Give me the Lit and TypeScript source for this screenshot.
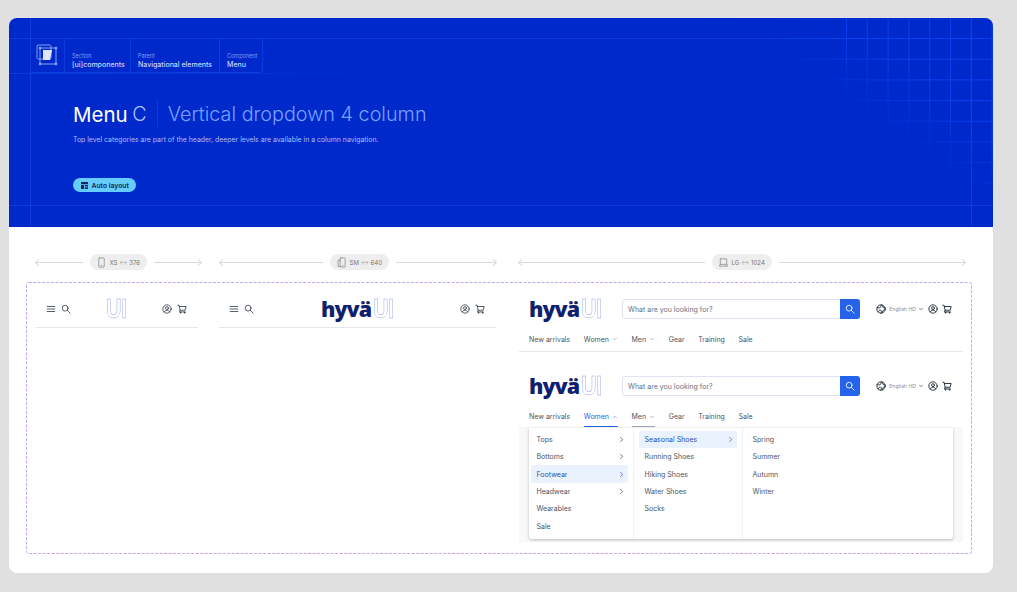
import { LitElement, html, css, svg } from 'lit'
import { customElement } from 'lit/decorators.js'
import { classMap } from 'lit/directives/class-map.js'

const icon = (size: number, body: unknown, stroke = '#1f2937', width = 1.8) => html`
  <svg class="icon" width=${size} height=${size} viewBox="0 0 24 24" fill="none" stroke=${stroke}
    stroke-width=${width} stroke-linecap="round" stroke-linejoin="round">${body}</svg>
`

const menuPath = svg`<path d="M3 6h18M3 12h18M3 18h18" />`
const searchPath = svg`<circle cx="10" cy="10" r="7" /><path d="M15.5 15.5L22 22" />`
const userPath = svg`<circle cx="12" cy="12" r="10" /><circle cx="12" cy="10" r="3.5" /><path d="M5.5 19c1.5-3 4-4 6.500-4s5 1 6.500 4" />`
const cartPath = svg`<path d="M2 3h3l2.500 12h12L22 6H6" /><path d="M7.500 15L6 19h14" /><circle cx="8" cy="21" r="1" /><circle cx="18" cy="21" r="1" />`
const globePath = svg`<circle cx="12" cy="12" r="10" /><path d="M3 9c3-1 5 1 7 0s1-5 3-7M5 19c1-3 3-5 6-4s2 4 1 7M15 21c0-3 1-5 3-6s3 0 4-1M16 3c-1 2-1 4 1 5s3 0 5 1" />`
const chevronDown = svg`<path d="M6 9l6 6 6-6" />`
const chevronUp = svg`<path d="M6 15l6-6 6 6" />`
const chevronRight = svg`<path d="M9 5l7 7-7 7" />`

const phonePath = svg`<rect x="6" y="2" width="12" height="20" rx="2" /><path d="M11 18.500h2" />`
const tabletPath = svg`<rect x="9" y="2" width="11" height="20" rx="1.500" /><path d="M9 7H4.500v13.500H9M14 18.500h1" />`
const laptopPath = svg`<path d="M6 4h12a1 1 0 0 1 1 1v11H5V5a1 1 0 0 1 1-1z" /><path d="M5 16l-2 4h18l-2-4" />`

const NAV = [
  { label: 'New arrivals' },
  { label: 'Women', chevron: true },
  { label: 'Men', chevron: true },
  { label: 'Gear' },
  { label: 'Training' },
  { label: 'Sale' },
]

const COL_ONE = [
  { label: 'Tops', more: true },
  { label: 'Bottoms', more: true },
  { label: 'Footwear', more: true, active: true },
  { label: 'Headwear', more: true },
  { label: 'Wearables' },
  { label: 'Sale' },
]
const COL_TWO = [
  { label: 'Seasonal Shoes', more: true, active: true },
  { label: 'Running Shoes' },
  { label: 'Hiking Shoes' },
  { label: 'Water Shoes' },
  { label: 'Socks' },
]
const COL_THREE = [{ label: 'Spring' }, { label: 'Summer' }, { label: 'Autumn' }, { label: 'Winter' }]

type MenuItem = { label: string; more?: boolean; active?: boolean }

@customElement('app-root')
export class AppRoot extends LitElement {
  static styles = css`
    :host {
      display: block;
      width: 1017px;
      height: 592px;
      box-sizing: border-box;
      padding: 18px 24px 19px 9px;
      background: #e0e0e0;
      font-family: Inter, 'Liberation Sans', sans-serif;
      overflow: hidden;
    }

    .card {
      height: 555px;
      background: #fff;
      border-radius: 8px;
      overflow: hidden;
    }

    .icon {
      display: block;
      flex: none;
    }

    /* hero */
    .hero {
      position: relative;
      height: 209px;
      box-sizing: border-box;
      padding: 20px 0 0 21px;
      background: #0029cc;
      overflow: hidden;
    }
    .hero-line {
      position: absolute;
      background: #0a3ce0;
    }
    .hl-top { left: 0; right: 0; top: 20px; height: 1px; }
    .hl-mid { left: 0; width: 420px; top: 55px; height: 1px; background: linear-gradient(90deg, #0a3ce0, #0029cc); }
    .hl-bottom { left: 0; right: 0; top: 187px; height: 1px; }
    .vl-left { left: 21px; top: 0; bottom: 0; width: 1px; }
    .vl-right { left: 962px; top: 0; bottom: 0; width: 1px; }
    .grid-fade {
      position: absolute;
      left: 700px;
      top: 0;
      width: 284px;
      height: 190px;
      -webkit-mask-image: linear-gradient(to top right, transparent 50%, #000 72%);
      mask-image: linear-gradient(to top right, transparent 50%, #000 72%);
    }
    .grid-v {
      position: absolute;
      left: 137px;
      right: 0;
      top: 0;
      bottom: 0;
      background-image: linear-gradient(90deg, #0a40ec 1px, transparent 1px);
      background-size: 20.800px 100%;
    }
    .grid-h {
      position: absolute;
      inset: 0;
      background-image: linear-gradient(#0a40ec 1px, transparent 1px);
      background-size: 100% 20.700px;
      background-position: 0 20px;
    }

    .crumbs {
      position: relative;
      display: flex;
      width: max-content;
      height: 35px;
      border-right: 1px solid #0a3ce0;
      border-bottom: 1px solid #0a3ce0;
      border-bottom-right-radius: 3px;
      box-sizing: border-box;
    }
    .crumb-logo {
      width: 35px;
      display: flex;
      align-items: center;
      justify-content: center;
      border-right: 1px solid #0a3ce0;
      box-sizing: border-box;
    }
    .crumb {
      display: flex;
      flex-direction: column;
      justify-content: flex-end;
      gap: 2px;
      padding: 0 7px 3.500px;
      border-right: 1px solid #0a3ce0;
      box-sizing: border-box;
    }
    .crumb:last-child { border-right: 0; }
    .crumb small {
      font-size: 5.500px;
      line-height: 6px;
      color: #7f9cf5;
    }
    .crumb span {
      font-size: 7px;
      line-height: 8px;
      font-weight: 500;
      color: #c9d5fb;
      white-space: nowrap;
    }

    .title {
      position: relative;
      display: flex;
      align-items: center;
      margin: 27px 0 0 43px;
      height: 28px;
      font-size: 19.800px;
      font-weight: 300;
      white-space: nowrap;
    }
    .title b {
      font-size: 20.500px;
      font-weight: 400;
      color: #fff;
    }
    .title .letter {
      margin-left: 4.500px;
      color: #a9c0ff;
    }
    .title .sub {
      margin-left: 10px;
      padding-left: 10px;
      border-left: 1px solid #0a3ce0;
      color: #79a0ff;
      line-height: 26px;
    }
    .lead {
      position: relative;
      margin: 7px 0 0 43px;
      font-size: 6.900px;
      line-height: 9px;
      color: #a9bdf8;
    }
    .badge {
      position: relative;
      display: flex;
      align-items: center;
      gap: 4px;
      width: max-content;
      height: 14px;
      margin: 34px 0 0 43px;
      padding: 0 7px 0 7.500px;
      border-radius: 7px;
      background: #66ccfb;
      color: #0b2a5e;
      font-size: 6.800px;
      font-weight: 600;
    }

    /* breakpoint rulers */
    .rulers {
      display: flex;
      padding: 27px 0 0 27px;
    }
    .ruler {
      flex: none;
      display: flex;
      align-items: center;
      gap: 7px;
      height: 16px;
    }
    .ruler.xs { width: 165px; }
    .ruler.sm { width: 276px; margin-left: 19px; }
    .ruler.lg { width: 446px; margin-left: 23px; }
    .ruler i {
      position: relative;
      flex: 1;
      height: 1px;
      background: #d9d9d9;
    }
    .ruler i.start { flex: none; }
    .ruler.xs i.start { width: 47px; }
    .ruler.sm i.start { width: 103px; }
    .ruler.lg i.start { width: 186px; }
    .ruler i::after {
      content: '';
      position: absolute;
      top: -2px;
      width: 4px;
      height: 4px;
      border-top: 1px solid #d9d9d9;
      border-left: 1px solid #d9d9d9;
    }
    .ruler i.start::after { left: 0; transform: rotate(-45deg); }
    .ruler i.end::after { right: 0; transform: rotate(135deg); }
    .pill {
      display: flex;
      align-items: center;
      gap: 3px;
      height: 16px;
      padding: 0 7px 0 5.500px;
      border-radius: 8px;
      background: #eeeeee;
      color: #777;
      font-size: 6.100px;
      white-space: nowrap;
    }
    .pill em {
      font-style: normal;
      color: #a8a8a8;
    }

    /* dashed frame */
    .frame {
      position: relative;
      display: flex;
      align-items: flex-start;
      width: 946px;
      height: 272px;
      box-sizing: border-box;
      margin: 12px 0 0 17px;
      padding: 9px 0 0 10px;
    }
    .dash {
      position: absolute;
      inset: 0;
    }
    .dash rect {
      fill: none;
      stroke: #c4a6f5;
      stroke-dasharray: 3 1.500;
    }
    .col-xs { flex: none; width: 162px; }
    .col-sm { flex: none; width: 277px; margin-left: 21px; }
    .col-lg { flex: none; width: 444px; margin-left: 23px; }

    .mobile-head {
      display: flex;
      align-items: center;
      justify-content: space-between;
      height: 36px;
      padding: 0 11px 0 10px;
      border-bottom: 1px solid #e5e7eb;
    }
    .mobile-head .group { display: flex; align-items: center; gap: 5px; }

    .logo {
      display: inline-flex;
      align-items: center;
      line-height: 22px;
      white-space: nowrap;
    }
    .logo b {
      font-family: 'Open Sans', sans-serif;
      font-size: 21.500px;
      font-weight: 800;
      letter-spacing: -1px;
      color: #101f6e;
      margin-right: 1.500px;
    }
    .logo u {
      display: inline-block;
      text-decoration: none;
      font-size: 25px;
      font-weight: 700;
      letter-spacing: -0.500px;
      color: transparent;
      -webkit-text-stroke: 0.5px #929fe8;
      transform: scaleX(0.85);
      transform-origin: left center;
      margin-right: -4px;
    }

    /* desktop header */
    .desk-top {
      display: flex;
      align-items: center;
      height: 36px;
      padding: 0 11px 0 10px;
    }
    .desk-top .logo { width: 93px; }
    .search {
      display: flex;
      width: 238px;
      height: 20px;
      box-sizing: border-box;
      border: 1px solid #dde3ef;
      border-radius: 3px;
    }
    .search span {
      flex: 1;
      padding-left: 5px;
      font-size: 7px;
      line-height: 19px;
      color: #6b7280;
    }
    .search button {
      display: flex;
      align-items: center;
      justify-content: center;
      width: 20px;
      height: 20px;
      margin: -1px -1px 0 0;
      padding: 0;
      border: 0;
      border-radius: 0 3px 3px 0;
      background: #2563eb;
    }
    .tools {
      display: flex;
      align-items: center;
      margin-left: auto;
    }
    .tools .lang {
      margin: 0 2px 0 3px;
      font-size: 5.200px;
      color: #8a919e;
      white-space: nowrap;
    }
    .tools .user { margin: 0 4px; }

    .desk-nav {
      display: flex;
      height: 25px;
      box-sizing: border-box;
      padding: 0 0 0 10px;
      gap: 13.600px;
      font-size: 7px;
      color: #4b5563;
      border-bottom: 1px solid #e5e7eb;
    }
    .nav-item {
      display: flex;
      align-items: center;
      gap: 3px;
      height: 24px;
      box-sizing: border-box;
      white-space: nowrap;
    }
    .desk-nav.expanded {
      height: 23px;
      border-bottom: 0;
    }
    .desk-nav.expanded .nav-item {
      height: 23px;
      padding-top: 3px;
      border-bottom: 1px solid transparent;
    }
    .desk-nav.expanded .nav-item.open {
      color: #2563eb;
      border-bottom-color: #2563eb;
    }
    .desk-nav.expanded .nav-item.hover {
      border-bottom-color: #9ca3af;
    }
    .second { margin-top: 16px; }

    .panel {
      height: 115px;
      box-sizing: border-box;
      padding: 1px 10px 0;
      background: #f8f8f8;
    }
    .dropdown {
      display: grid;
      grid-template-columns: 105px 109px 1fr;
      height: 111px;
      background: #fff;
      border-radius: 0 0 3px 3px;
      box-shadow: 0 1px 3px rgba(0, 0, 0, 0.25);
    }
    .col {
      padding: 2.600px 5px 0 2px;
      border-right: 1px solid #f0f1f3;
      box-sizing: border-box;
    }
    .col:nth-child(2) { padding-left: 5px; padding-right: 5px; }
    .col:last-child { border-right: 0; padding-left: 4px; }
    .row {
      display: flex;
      align-items: center;
      justify-content: space-between;
      height: 17.400px;
      padding: 0 3.500px 0 5.500px;
      border-radius: 2px;
      font-size: 7px;
      color: #4b5563;
      white-space: nowrap;
    }
    .row.active {
      background: #eaf2fe;
      color: #2b50b8;
    }
  `

  private logo(full: boolean) {
    return html`<span class="logo">${full ? html`<b>hyvä</b>` : ''}<u>UI</u></span>`
  }

  private mobileHead(full: boolean) {
    return html`
      <div class="mobile-head">
        <div class="group">
          ${icon(10, menuPath)}
          ${icon(10, searchPath)}
        </div>
        ${this.logo(full)}
        <div class="group">
          ${icon(10, userPath)}
          ${icon(10, cartPath)}
        </div>
      </div>
    `
  }

  private deskTop() {
    return html`
      <div class="desk-top">
        ${this.logo(true)}
        <div class="search">
          <span>What are you looking for?</span>
          <button>${icon(10, searchPath, '#fff', 2)}</button>
        </div>
        <div class="tools">
          ${icon(10, globePath, '#1f2937', 2.200)}
          <span class="lang">English HD</span>
          ${icon(6, chevronDown, '#374151', 2.500)}
          <span class="user">${icon(10, userPath, '#1f2937', 2.200)}</span>
          ${icon(10, cartPath, '#1f2937', 2.200)}
        </div>
      </div>
    `
  }

  private deskNav(expanded: boolean) {
    return html`
      <div class=${classMap({ 'desk-nav': true, expanded })}>
        ${NAV.map(item => {
          const open = expanded && item.label === 'Women'
          const hover = expanded && item.label === 'Men'
          return html`
            <div class=${classMap({ 'nav-item': true, open, hover })}>
              ${item.label}
              ${item.chevron
                ? icon(6, open ? chevronUp : chevronDown, open ? '#2563eb' : '#6b7280', 1.800)
                : ''}
            </div>
          `
        })}
      </div>
    `
  }

  private menuColumn(items: MenuItem[]) {
    return html`
      <div class="col">
        ${items.map(item => html`
          <div class=${classMap({ row: true, active: !!item.active })}>
            ${item.label}
            ${item.more ? icon(7, chevronRight, item.active ? '#2b50b8' : '#374151', 2.400) : ''}
          </div>
        `)}
      </div>
    `
  }

  private ruler(size: string, glyph: unknown, name: string, width: string) {
    return html`
      <div class="ruler ${size}">
        <i class="start"></i>
        <div class="pill">
          ${icon(11, glyph, '#777', 1.400)}
          <span>${name} <em>↔</em> ${width}</span>
        </div>
        <i class="end"></i>
      </div>
    `
  }

  render() {
    return html`
      <div class="card">
        <header class="hero">
          <div class="hero-line hl-top"></div>
          <div class="hero-line hl-mid"></div>
          <div class="hero-line hl-bottom"></div>
          <div class="hero-line vl-left"></div>
          <div class="hero-line vl-right"></div>
          <div class="grid-fade">
            <div class="grid-v"></div>
            <div class="grid-h"></div>
          </div>

          <nav class="crumbs">
            <div class="crumb-logo">
              <svg width="24" height="24" viewBox="0 0 24 24" fill="none" stroke="#a9bdf8" stroke-width="0.8">
                <rect x="2" y="2" width="14" height="14" rx="1.500" />
                <rect x="5" y="5" width="16" height="16" />
                <path d="M8 7h9l-2 10H8z" fill="#dfe6fd" stroke="none" />
                <circle cx="5" cy="5" r="1" />
                <circle cx="21" cy="5" r="1" />
                <circle cx="5" cy="21" r="1" />
                <circle cx="21" cy="21" r="1" />
              </svg>
            </div>
            <div class="crumb" style="width:66px"><small>Section</small><span>[ui]components</span></div>
            <div class="crumb" style="width:89px"><small>Parent</small><span>Navigational elements</span></div>
            <div class="crumb" style="width:42px"><small>Component</small><span>Menu</span></div>
          </nav>

          <h1 class="title">
            <b>Menu</b><span class="letter">C</span><span class="sub">Vertical dropdown 4 column</span>
          </h1>
          <p class="lead">Top level categories are part of the header, deeper levels are available in a column navigation.</p>
          <span class="badge">
            <svg width="7" height="7" viewBox="0 0 8 8" fill="#0b2a5e">
              <path d="M0 0h8v2.500H0zM0 3.500h3.500V8H0zM4.500 3.500H8V5H4.500zM4.500 6H8v2H4.500z" />
            </svg>
            Auto layout
          </span>
        </header>

        <div class="rulers">
          ${this.ruler('xs', phonePath, 'XS', '376')}
          ${this.ruler('sm', tabletPath, 'SM', '640')}
          ${this.ruler('lg', laptopPath, 'LG', '1024')}
        </div>

        <section class="frame">
          <svg class="dash" width="946" height="272"><rect x="0.5" y="0.5" width="945" height="271" rx="2" /></svg>
          <div class="col-xs">${this.mobileHead(false)}</div>
          <div class="col-sm">${this.mobileHead(true)}</div>
          <div class="col-lg">
            ${this.deskTop()}
            ${this.deskNav(false)}
            <div class="second">
              ${this.deskTop()}
              ${this.deskNav(true)}
              <div class="panel">
                <div class="dropdown">
                  ${this.menuColumn(COL_ONE)}
                  ${this.menuColumn(COL_TWO)}
                  ${this.menuColumn(COL_THREE)}
                </div>
              </div>
            </div>
          </div>
        </section>
      </div>
    `
  }
}

declare global {
  interface HTMLElementTagNameMap {
    'app-root': AppRoot
  }
}
